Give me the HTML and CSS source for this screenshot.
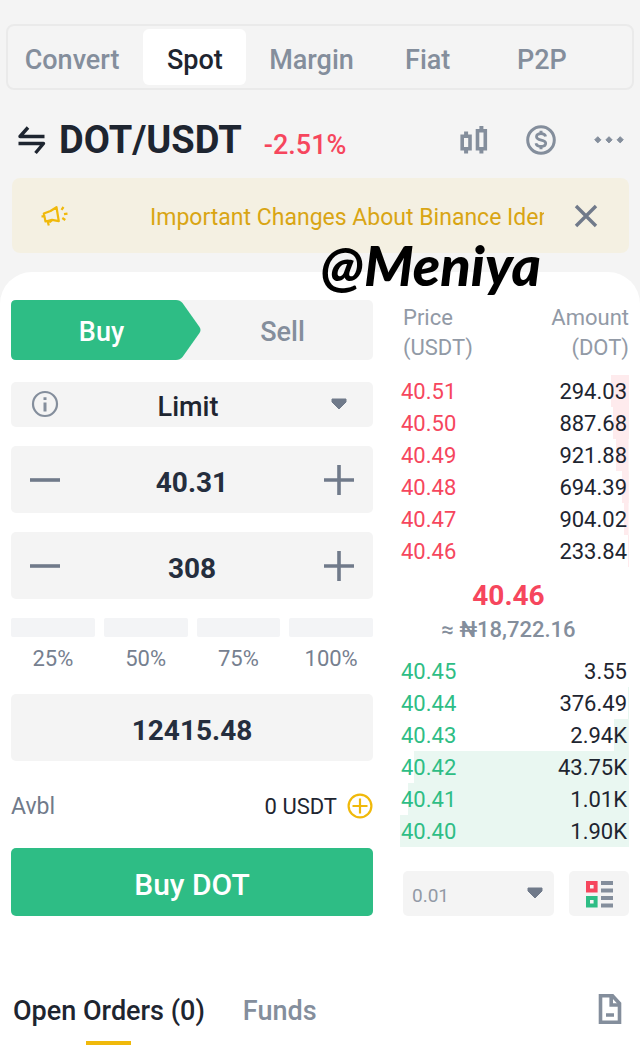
FILE: index.html
```html
<!DOCTYPE html>
<html lang="en">
<head>
<meta charset="utf-8">
<meta name="viewport" content="width=device-width, initial-scale=1">
<title>DOT/USDT Spot</title>
<link rel="stylesheet" href="styles.css">
</head>
<body>
<header class="top">
  <nav class="modes">
    <a class="mode" href="#convert">Convert</a>
    <a class="mode mode-active" href="#spot" aria-current="page">Spot</a>
    <a class="mode" href="#margin">Margin</a>
    <a class="mode" href="#fiat">Fiat</a>
    <a class="mode" href="#p2p">P2P</a>
  </nav>
  <div class="pair">
    <button class="icon-btn" aria-label="Switch pair">
      <svg width="30" height="30" viewBox="0 0 30 30" fill="none" stroke="#1e2530" stroke-width="3.4"><path d="M27.500 11.500H3L11 2.500M1.500 18.500H26.500L18.500 28" stroke-linejoin="round"/></svg>
    </button>
    <h1 class="pair-name">DOT/USDT</h1>
    <span class="change">-2.51%</span>
    <div class="pair-tools">
      <button class="icon-btn" aria-label="Chart">
        <svg width="28" height="28" viewBox="0 0 28 28" fill="none" stroke="#848e9c"><path d="M2.200 10.200h7.800v12.600H2.200zM17.500 4.800h7.800v18H17.500z" stroke-width="3.600"/><path d="M6.100 5.500v4M6.100 23v4.500M21.400 0v4M21.400 23v4.500" stroke-width="4"/></svg>
      </button>
      <button class="icon-btn" aria-label="Fiat price">
        <svg width="30" height="30" viewBox="0 0 30 30" fill="none" stroke="#848e9c" stroke-width="3"><circle cx="15" cy="15" r="13.300"/><path d="M19.600 11.600C19.200 9.500 17.400 8.600 15 8.600c-2.600 0-4.500 1.200-4.500 3.200 0 4.500 9.200 2.100 9.200 6.400 0 2-2 3.200-4.700 3.200-2.600 0-4.600-1-5-3.200" stroke-width="2.800"/><path d="M15 5.800v3M15 21v3.200" stroke-width="3"/></svg>
      </button>
      <button class="icon-btn" aria-label="More">
        <svg width="30" height="30" viewBox="0 0 30 30" fill="#848e9c" stroke="#848e9c" stroke-linejoin="round"><path d="M3.800 11.700l3.100 3.100-3.100 3.100-3.100-3.100zM15 11.700l3.100 3.100-3.100 3.100-3.100-3.100zM26.200 11.700l3.100 3.100-3.100 3.100-3.100-3.100z"/></svg>
      </button>
    </div>
  </div>
  <div class="notice">
    <svg class="horn" width="28" height="22" viewBox="0 0 28 22" fill="none" stroke="#f0b90b" stroke-width="2.200" stroke-linejoin="round"><path d="M15.500 2.200L17.800 16.200 11 14.800 4.500 16.500 2.800 8.500 9.500 6zM3.200 11.300H.500M6.500 16l1.300 4.500M11.500 15l-3.200 2.500"/><path d="M20.500 4.800L22.500 2M23 9.200L26.500 8.600M21.300 13L24.300 15"/></svg>
    <a class="notice-text" href="#notice">Important Changes About Binance Iden</a>
    <button class="icon-btn" aria-label="Close notice">
      <svg width="24" height="24" viewBox="0 0 24 24" stroke="#707a8a" stroke-width="3.400"><path d="M2 2l20 20M22 2L2 22"/></svg>
    </button>
    <span class="watermark">@Meniya</span>
  </div>
</header>
<main class="sheet">
  <div class="trade">
    <form class="order">
      <div class="side">
        <button type="button" class="side-btn side-buy">
          <svg class="side-shape" viewBox="0 0 190 60" preserveAspectRatio="none" fill="#2ebd85"><path d="M5 0H165Q169 0 171.500 3L188.500 27Q190.500 30 188.500 33L171.500 57Q169 60 165 60H5Q0 60 0 55V5Q0 0 5 0z"/></svg>
          <span class="side-label">Buy</span>
        </button>
        <button type="button" class="side-btn">Sell</button>
      </div>
      <div class="type">
        <svg class="info" width="28" height="28" viewBox="0 0 28 28" fill="none" stroke="#848e9c"><circle cx="14" cy="14" r="12" stroke-width="2.200"/><path d="M14 12.500V21.500M14 7.200V10" stroke-width="3"/></svg>
        <select class="type-select" aria-label="Order type"><option>Limit</option></select>
        <svg class="caret" width="16" height="12" viewBox="0 0 16 12" fill="#707a8a"><path d="M1 1h14v3L8 11 1 4z" stroke="#707a8a" stroke-linejoin="round"/></svg>
      </div>
      <div class="stepper">
        <button type="button" class="icon-btn" aria-label="Decrease price"><svg width="32" height="32" viewBox="0 0 32 32" stroke="#707a8a" stroke-width="3.600"><path d="M1 16h30"/></svg></button>
        <input class="num" aria-label="Price" value="40.31">
        <button type="button" class="icon-btn" aria-label="Increase price"><svg width="32" height="32" viewBox="0 0 32 32" stroke="#707a8a" stroke-width="3.600"><path d="M1 16h30M16 1v30"/></svg></button>
      </div>
      <div class="stepper">
        <button type="button" class="icon-btn" aria-label="Decrease amount"><svg width="32" height="32" viewBox="0 0 32 32" stroke="#707a8a" stroke-width="3.600"><path d="M1 16h30"/></svg></button>
        <input class="num" aria-label="Amount" value="308">
        <button type="button" class="icon-btn" aria-label="Increase amount"><svg width="32" height="32" viewBox="0 0 32 32" stroke="#707a8a" stroke-width="3.600"><path d="M1 16h30M16 1v30"/></svg></button>
      </div>
      <div class="shares">
        <button type="button" class="share">25%</button>
        <button type="button" class="share">50%</button>
        <button type="button" class="share">75%</button>
        <button type="button" class="share">100%</button>
      </div>
      <div class="stepper total"><input class="num" aria-label="Total" value="12415.48"></div>
      <div class="avbl">
        <span class="avbl-label">Avbl</span>
        <span>0 USDT</span>
        <button type="button" class="icon-btn" aria-label="Deposit"><svg width="26" height="26" viewBox="0 0 26 26" fill="none" stroke="#f0b90b" stroke-width="2.200"><circle cx="13" cy="13" r="11.400"/><path d="M5.500 13h15M13 5.500v15"/></svg></button>
      </div>
      <button type="button" class="submit">Buy DOT</button>
    </form>
    <section class="book">
      <table class="levels">
        <thead><tr><th>Price<br>(USDT)</th><th>Amount<br>(DOT)</th></tr></thead>
        <tbody class="asks">
          <tr style="--depth:8%"><td>40.51</td><td>294.03</td></tr>
          <tr style="--depth:7%"><td>40.50</td><td>887.68</td></tr>
          <tr style="--depth:5.500%"><td>40.49</td><td>921.88</td></tr>
          <tr style="--depth:3%"><td>40.48</td><td>694.39</td></tr>
          <tr style="--depth:2%"><td>40.47</td><td>904.02</td></tr>
          <tr style="--depth:.5%"><td>40.46</td><td>233.84</td></tr>
        </tbody>
        <tbody><tr><td class="last" colspan="2"><strong class="last-price">40.46</strong><span class="last-fiat">≈ ₦18,722.16</span></td></tr></tbody>
        <tbody class="bids">
          <tr style="--depth:0%"><td>40.45</td><td>3.55</td></tr>
          <tr style="--depth:.5%"><td>40.44</td><td>376.49</td></tr>
          <tr style="--depth:6.500%"><td>40.43</td><td>2.94K</td></tr>
          <tr style="--depth:94%"><td>40.42</td><td>43.75K</td></tr>
          <tr style="--depth:96.500%"><td>40.41</td><td>1.01K</td></tr>
          <tr style="--depth:100%"><td>40.40</td><td>1.90K</td></tr>
        </tbody>
      </table>
      <div class="book-tools">
        <div class="tick">
          <select class="tick-select" aria-label="Price grouping"><option>0.01</option></select>
          <svg class="caret" width="16" height="12" viewBox="0 0 16 12" fill="#707a8a"><path d="M1 1h14v3L8 11 1 4z" stroke="#707a8a" stroke-linejoin="round"/></svg>
        </div>
        <button class="layout-btn" aria-label="Order book layout">
          <svg width="28" height="28" viewBox="0 0 28 28" fill="none" stroke-width="4"><path d="M3 3h7.600v7.600H3z" stroke="#f6465d"/><path d="M3 18h7.600v7.600H3z" stroke="#2ebd85"/><path d="M16 3h12M16 10.500h12M16 18h12M16 25.500h12" stroke="#848e9c"/></svg>
        </button>
      </div>
    </section>
  </div>
  <nav class="orders-nav">
    <a class="orders-tab orders-active" href="#orders" aria-current="page">Open Orders (0)</a>
    <a class="orders-tab" href="#funds">Funds</a>
    <button class="icon-btn history" aria-label="Order history">
      <svg width="24" height="30" viewBox="0 0 24 30" fill="none" stroke="#848e9c" stroke-width="3.600"><path d="M2.500 1.800H14.500L21.500 9.500V28.200H2.500z"/><path d="M13.200 2v9H21.500M8 21h8"/></svg>
    </button>
  </nav>
</main>
</body>
</html>
```
FILE: styles.css
```css
* { box-sizing: border-box; }
body {
  margin: 0;
  background: #f4f4f4;
  color: #1e2530;
  font-family: Roboto, "Noto Sans", sans-serif;
  font-size: 22px;
}
button, input, select {
  font: inherit;
  color: inherit;
  border: 0;
  padding: 0;
  margin: 0;
  background: none;
  border-radius: 0;
  outline: 0;
}
a { color: inherit; text-decoration: none; }
svg { display: block; flex: none; }
.icon-btn { flex: none; display: block; }

.top { padding: 24px 6px 19px; }
.modes {
  display: grid;
  grid-template-columns: 128fr 117fr 116fr 116fr 112fr;
  padding: 3px 34px 3px 0;
  border: 2px solid #eaeaea;
  border-radius: 8px;
  color: #848e9c;
  font-size: 27px;
  font-weight: 500;
  line-height: 50px;
  text-align: center;
}
.mode { padding-top: 6px; }
.mode-active { margin: 0 7px; background: #fff; border-radius: 6px; color: #1e2530; }

.pair { display: flex; align-items: center; height: 88px; padding: 12px 10px 0 11px; }
.pair-name { margin: 0 0 0 12px; font-size: 38px; font-weight: 700; line-height: 48px; }
.change { margin: 9px 0 0 22px; color: #f6465d; font-size: 27px; font-weight: 500; }
.pair-tools { display: flex; align-items: center; gap: 38px; margin-left: auto; }

.notice {
  position: relative;
  display: flex;
  align-items: center;
  height: 75px;
  margin: 0 5px 0 6px;
  padding: 0 31px 0 29px;
  background: #f4f0e2;
  border-radius: 8px;
}
.notice-text {
  flex: 1;
  min-width: 0;
  margin: 4px 30px 0 81px;
  overflow: hidden;
  color: #d9a514;
  font-size: 23px;
  white-space: nowrap;
}
.watermark {
  position: absolute;
  right: 88px;
  bottom: -44px;
  color: #000;
  font: italic 900 56px/64px Lato, sans-serif;
}

.sheet { background: #fff; border-radius: 32px 32px 0 0; padding: 28px 11px 0; }
.trade { display: grid; grid-template-columns: 362fr 229fr; gap: 27px; }
.order { min-width: 0; }
.side {
  display: grid;
  grid-template-columns: 190fr 172fr;
  height: 60px;
  background: #f4f4f4;
  border-radius: 5px;
  color: #848e9c;
  font-size: 27px;
  font-weight: 500;
}
.side-btn { padding: 4px 9px 0 0; }
.side-buy { position: relative; color: #fff; }
.side-shape { position: absolute; inset: 0; width: 100%; height: 100%; }
.side-label { position: relative; }
.type, .stepper { background: #f4f4f4; border-radius: 5px; }
.type { position: relative; height: 45px; margin: 22px 0 19px; font-size: 27px; font-weight: 500; }
.type-select {
  width: 100%;
  height: 100%;
  padding: 4px 8px 0 0;
  appearance: none;
  text-align: center;
  text-align-last: center;
}
.info { position: absolute; left: 20px; top: 8px; pointer-events: none; }
.caret { position: absolute; right: 26px; top: 16px; pointer-events: none; }
.stepper { display: flex; align-items: center; height: 67px; margin-bottom: 19px; padding: 0 18px; }
.num { flex: 1; min-width: 0; height: 100%; padding-top: 5px; text-align: center; font-size: 28px; font-weight: 700; color: #252e3e; }
.shares { display: grid; grid-template-columns: repeat(4, 1fr); gap: 9px; height: 57px; margin-bottom: 19px; }
.share { display: flex; flex-direction: column; align-items: center; gap: 7px; color: #76808f; line-height: 30px; }
.share::before { content: ""; width: 100%; height: 19px; background: #f3f4f6; border-radius: 2px; }
.total { margin: 0; }
.avbl { display: flex; align-items: center; height: 87px; padding-top: 3px; }
.avbl-label { margin-right: auto; color: #707a8a; font-size: 23px; }
.avbl .icon-btn { margin-left: 10px; }
.submit { width: 100%; height: 68px; padding-top: 4px; background: #2ebd85; border-radius: 5px; color: #fff; font-size: 30px; font-weight: 500; }

.levels { width: 100%; border-collapse: collapse; line-height: 32px; }
.levels th { height: 75px; padding: 3px 0 0 3px; vertical-align: top; color: #929aa6; font-weight: 400; line-height: 30px; text-align: right; }
.levels td { height: 32px; padding: 2px 2px 0 1px; line-height: 30px; text-align: right; }
.levels td:first-child, .levels th:first-child { text-align: left; }
.asks tr { background: linear-gradient(#feebed, #feebed) right / var(--depth) 100% no-repeat; }
.bids tr { background: linear-gradient(#e9f7f1, #e9f7f1) right / var(--depth) 100% no-repeat; }
.asks td:first-child { color: #f6465d; }
.bids td:first-child { color: #2ebd85; }
.levels .last:first-child { height: 88px; padding: 2px 12px 0 0; text-align: center; }
.last-price, .last-fiat { display: block; }
.last-price { color: #f6465d; font-size: 28px; line-height: 36px; }
.last-fiat { color: #848e9c; font-weight: 500; line-height: 32px; }
.book-tools { display: flex; gap: 15px; margin: 24px 0 0 3px; }
.tick { position: relative; flex: 1; height: 45px; background: #f4f4f4; border-radius: 5px; }
.tick-select { width: 100%; height: 100%; padding: 3px 9px 0; appearance: none; color: #929aa6; font-size: 19px; }
.tick .caret { right: 11px; }
.layout-btn { display: grid; place-items: center; width: 60px; height: 45px; background: #f4f4f4; border-radius: 5px; }

.orders-nav { display: flex; align-items: center; gap: 38px; height: 68px; margin-top: 61px; padding: 0 7px 0 2px; }
.orders-tab { color: #848e9c; font-size: 27px; font-weight: 500; line-height: 68px; }
.orders-active {
  color: #1e2530;
  background: linear-gradient(#f0b90b, #f0b90b) center bottom / 45px 4px no-repeat;
}
.history { margin: 0 0 5px auto; }
```
